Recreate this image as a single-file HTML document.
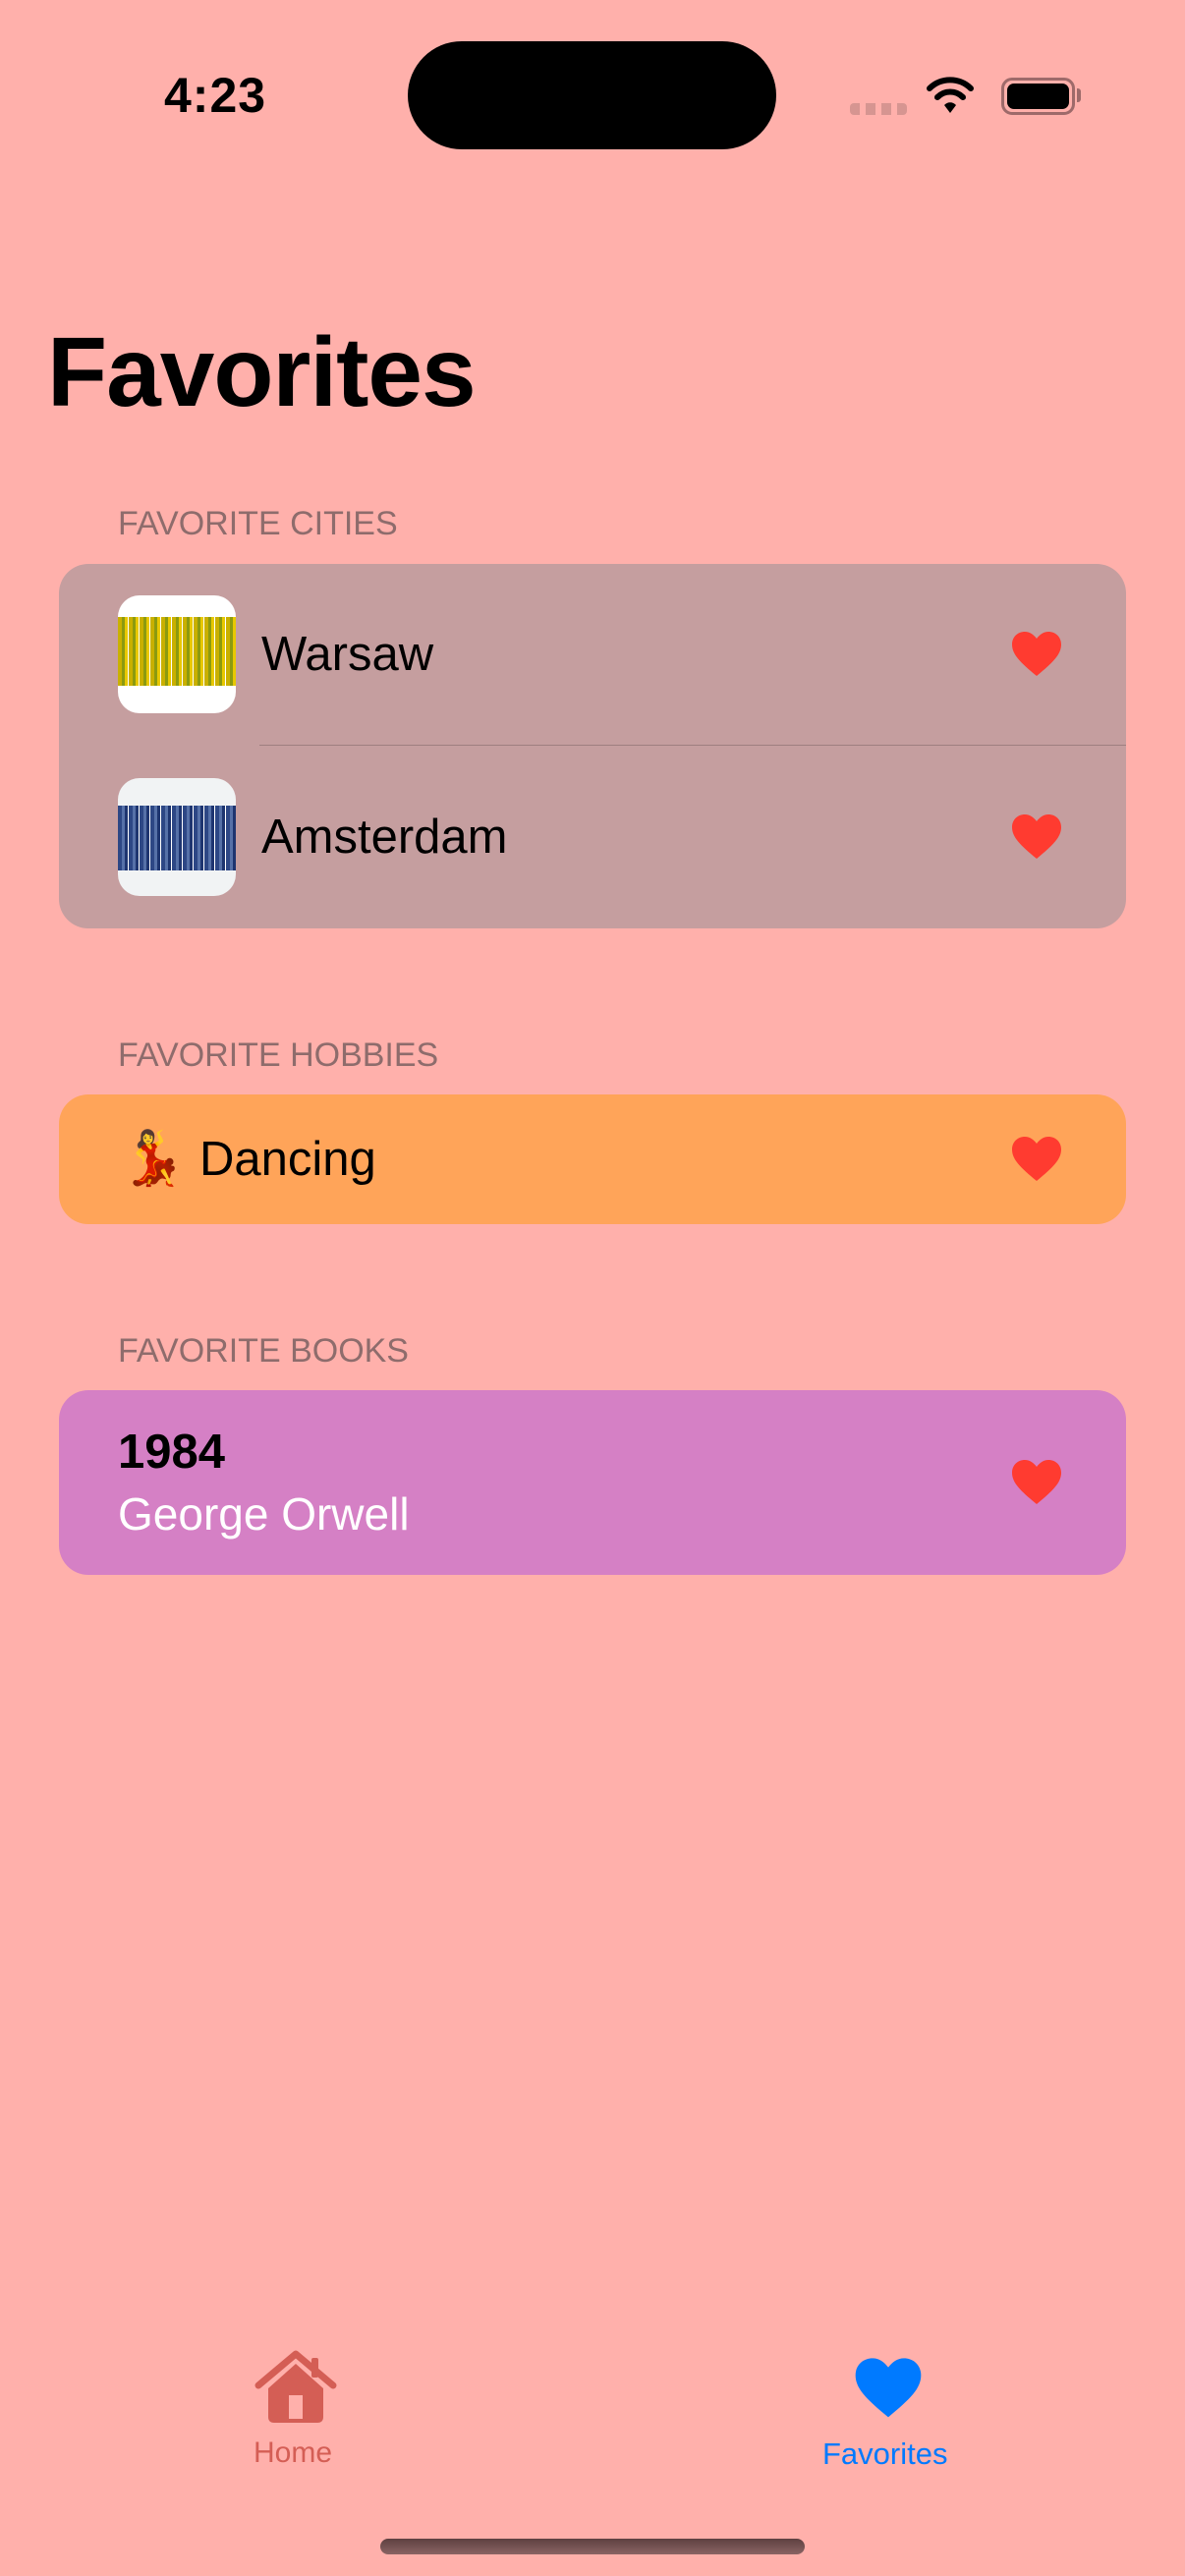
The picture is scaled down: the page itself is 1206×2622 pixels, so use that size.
<!DOCTYPE html>
<html><head><meta charset="utf-8"><style>
*{margin:0;padding:0;box-sizing:border-box}
body{width:1206px;height:2622px;background:#FFB0AB;font-family:"Liberation Sans",sans-serif;position:relative;overflow:hidden}
.a{position:absolute}
.hdr{position:absolute;left:120px;font-size:34px;color:#8E6C6C;letter-spacing:0px}
.card{position:absolute;left:60px;width:1086px;border-radius:30px}
.heart{position:absolute;left:1028px;width:54px;height:48px}
.lbl{position:absolute;font-size:49px;color:#000}
.thumb{position:absolute;left:120px;width:120px;height:120px;border-radius:22px;overflow:hidden;background:#fff}
</style></head><body>
<div class="a" style="left:167px;top:68px;font-size:50px;font-weight:bold;letter-spacing:1px">4:23</div>
<div class="a" style="left:415px;top:42px;width:375px;height:110px;background:#000;border-radius:55px"></div>
<div class="a" style="left:865px;top:105px;width:58px;height:12px;background:repeating-linear-gradient(90deg,#D69591 0 10px,transparent 10px 16px);border-radius:4px"></div>
<svg class="a" style="left:942px;top:78px" width="50" height="40" viewBox="0 0 50 40"><path d="M4 12 A30 30 0 0 1 46 12" stroke="#000" stroke-width="6" fill="none" stroke-linecap="round"/><path d="M12 21 A18 18 0 0 1 38 21" stroke="#000" stroke-width="6" fill="none" stroke-linecap="round"/><path d="M19 29 L25 37 L31 29 A8 8 0 0 0 19 29Z" fill="#000"/></svg>
<div class="a" style="left:1019px;top:79px;width:75px;height:38px;border:3px solid #9E6A6A;border-radius:11px;padding:3px"><div style="width:100%;height:100%;background:#000;border-radius:7px"></div></div>
<div class="a" style="left:1096px;top:90px;width:4px;height:14px;background:#9E6A6A;border-radius:0 3px 3px 0"></div>
<div class="a" style="left:48px;top:322px;font-size:100px;font-weight:bold;letter-spacing:-1px">Favorites</div>

<div class="hdr" style="top:514px">FAVORITE CITIES</div>
<div class="card" style="top:574px;height:371px;background:#C59E9F"></div>
<div class="thumb" style="top:606px"><div style="position:absolute;left:0;top:22px;width:120px;height:70px;background:repeating-linear-gradient(90deg,#C9B000 0 4px,#8C9A10 4px 7px,#E8C800 7px 10px,#fff 10px 11px)"></div></div>
<div class="lbl" style="left:266px;top:638px">Warsaw</div>
<div class="a" style="left:264px;top:758px;width:882px;height:1px;background:#9E7E7F"></div>
<div class="thumb" style="top:792px;background:#F1F3F4"><div style="position:absolute;left:0;top:28px;width:120px;height:66px;background:repeating-linear-gradient(90deg,#2D4785 0 4px,#5671A8 4px 7px,#1E3570 7px 10px,#fff 10px 11px)"></div></div>
<div class="lbl" style="left:266px;top:824px">Amsterdam</div>

<div class="hdr" style="top:1055px">FAVORITE HOBBIES</div>
<div class="card" style="top:1114px;height:132px;background:#FFA459"></div>
<div class="a" style="left:122px;top:1148px;font-size:54px;font-family:'Noto Color Emoji',sans-serif">💃</div>
<div class="lbl" style="left:203px;top:1152px">Dancing</div>

<div class="hdr" style="top:1356px">FAVORITE BOOKS</div>
<div class="card" style="top:1415px;height:188px;background:#D580C5"></div>
<div class="lbl" style="left:120px;top:1450px;font-weight:bold">1984</div>
<div class="lbl" style="left:120px;top:1514px;color:#fff;font-size:46px">George Orwell</div>

<svg width="0" height="0"><defs><path id="h" d="M27 46 C10 32 2 24 2 14 C2 6 8 1 15 1 C20 1 24 4 27 8 C30 4 34 1 39 1 C46 1 52 6 52 14 C52 24 44 32 27 46Z"/></defs></svg>
<svg class="heart" style="top:642px" viewBox="0 0 54 48"><use href="#h" fill="#FF3B30"/></svg>
<svg class="heart" style="top:828px" viewBox="0 0 54 48"><use href="#h" fill="#FF3B30"/></svg>
<svg class="heart" style="top:1156px" viewBox="0 0 54 48"><use href="#h" fill="#FF3B30"/></svg>
<svg class="heart" style="top:1485px" viewBox="0 0 54 48"><use href="#h" fill="#FF3B30"/></svg>

<svg class="a" style="left:259px;top:2392px" width="84" height="76" viewBox="0 0 84 76"><path d="M4 36 L42 4 L80 36" stroke="#D45E55" stroke-width="7" fill="none" stroke-linecap="round" stroke-linejoin="round"/><rect x="58" y="8" width="7" height="20" rx="2" fill="#D45E55"/><path d="M14 39 L42 14 L70 39 V68 Q70 74 64 74 H20 Q14 74 14 68Z" fill="#D45E55"/><rect x="35" y="46" width="14" height="24" fill="#FFB0AB"/></svg>
<div class="a" style="left:258px;top:2480px;font-size:30px;color:#D45E55">Home</div>
<svg class="a" style="left:868px;top:2397px" width="72" height="68" viewBox="0 0 54 48"><use href="#h" fill="#007AFF"/></svg>
<div class="a" style="left:837px;top:2480px;font-size:31px;color:#007AFF">Favorites</div>
<div class="a" style="left:387px;top:2584px;width:432px;height:16px;border-radius:8px;background:linear-gradient(180deg,#5E4040,#8A6464)"></div>
</body></html>
